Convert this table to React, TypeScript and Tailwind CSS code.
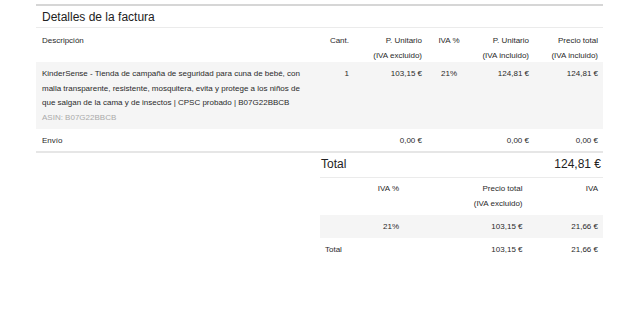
import React from 'react';

const font = { fontFamily: '"Liberation Sans", Arial, Helvetica, sans-serif' };

const cols = 'grid grid-cols-[275px_43px_73px_44px_63px_69px]';
const subCols = 'grid grid-cols-[40px_44px_123.5px_75.5px]';

export default function App() {
  return (
    <div className="w-[640px] h-[309px] bg-white text-[#2a2a2a] pt-[4px]" style={font}>
      <div className="ml-[36px] w-[567px] border-t-2 border-[#d6d6d6]">
        <div className="h-[22px] flex items-center px-[6px] text-[12px] text-[#222] border-b border-[#ebebeb]">
          Detalles de la factura
        </div>

        <div className={`${cols} h-[34px] pt-[6px] text-[8px] leading-[14.5px]`}>
          <div className="pl-[6px]">Descripción</div>
          <div className="text-right pr-[5px]">Cant.</div>
          <div className="text-right pr-[5px]">P. Unitario<br />(IVA excluido)</div>
          <div className="text-center">IVA %</div>
          <div className="text-right pr-[5px]">P. Unitario<br />(IVA incluido)</div>
          <div className="text-right pr-[5px]">Precio total<br />(IVA incluido)</div>
        </div>

        <div className={`${cols} bg-[#f5f5f5] pt-[5px] pb-[4px] text-[8px] leading-[14.5px]`}>
          <div className="pl-[6px] pr-[5px]">
            KinderSense - Tienda de campaña de seguridad para cuna de bebé, con malla transparente, resistente, mosquitera, evita y protege a los niños de que salgan de la cama y de insectos | CPSC probado | B07G22BBCB
            <div className="text-[#aaa]">ASIN: B07G22BBCB</div>
          </div>
          <div className="text-right pr-[5px]">1</div>
          <div className="text-right pr-[5px]">103,15 €</div>
          <div className="text-center">21%</div>
          <div className="text-right pr-[5px]">124,81 €</div>
          <div className="text-right pr-[5px]">124,81 €</div>
        </div>

        <div className={`${cols} h-[24px] pt-[2px] items-center text-[8px] border-b-2 border-[#e6e6e6]`}>
          <div className="pl-[6px]">Envío</div>
          <div />
          <div className="text-right pr-[5px]">0,00 €</div>
          <div />
          <div className="text-right pr-[5px]">0,00 €</div>
          <div className="text-right pr-[5px]">0,00 €</div>
        </div>

        <div className="ml-[284px] w-[283px]">
          <div className="h-[25px] pb-[2px] flex items-center justify-between pl-[1px] pr-[2px] text-[12px] text-[#222] border-b border-[#ebebeb]">
            <span>Total</span>
            <span>124,81 €</span>
          </div>
          <div className={`${subCols} h-[37px] pt-[3px] text-[8px] leading-[15px]`}>
            <div />
            <div className="text-right pr-[5px]">IVA %</div>
            <div className="text-right pr-[5px]">Precio total<br />(IVA excluido)</div>
            <div className="text-right pr-[5px]">IVA</div>
          </div>
          <div className={`${subCols} h-[23px] items-center bg-[#f5f5f5] text-[8px]`}>
            <div />
            <div className="text-right pr-[5px]">21%</div>
            <div className="text-right pr-[5px]">103,15 €</div>
            <div className="text-right pr-[5px]">21,66 €</div>
          </div>
          <div className={`${subCols} h-[24px] items-center text-[8px]`}>
            <div className="pl-[5px]">Total</div>
            <div />
            <div className="text-right pr-[5px]">103,15 €</div>
            <div className="text-right pr-[5px]">21,66 €</div>
          </div>
        </div>
      </div>
    </div>
  );
}
